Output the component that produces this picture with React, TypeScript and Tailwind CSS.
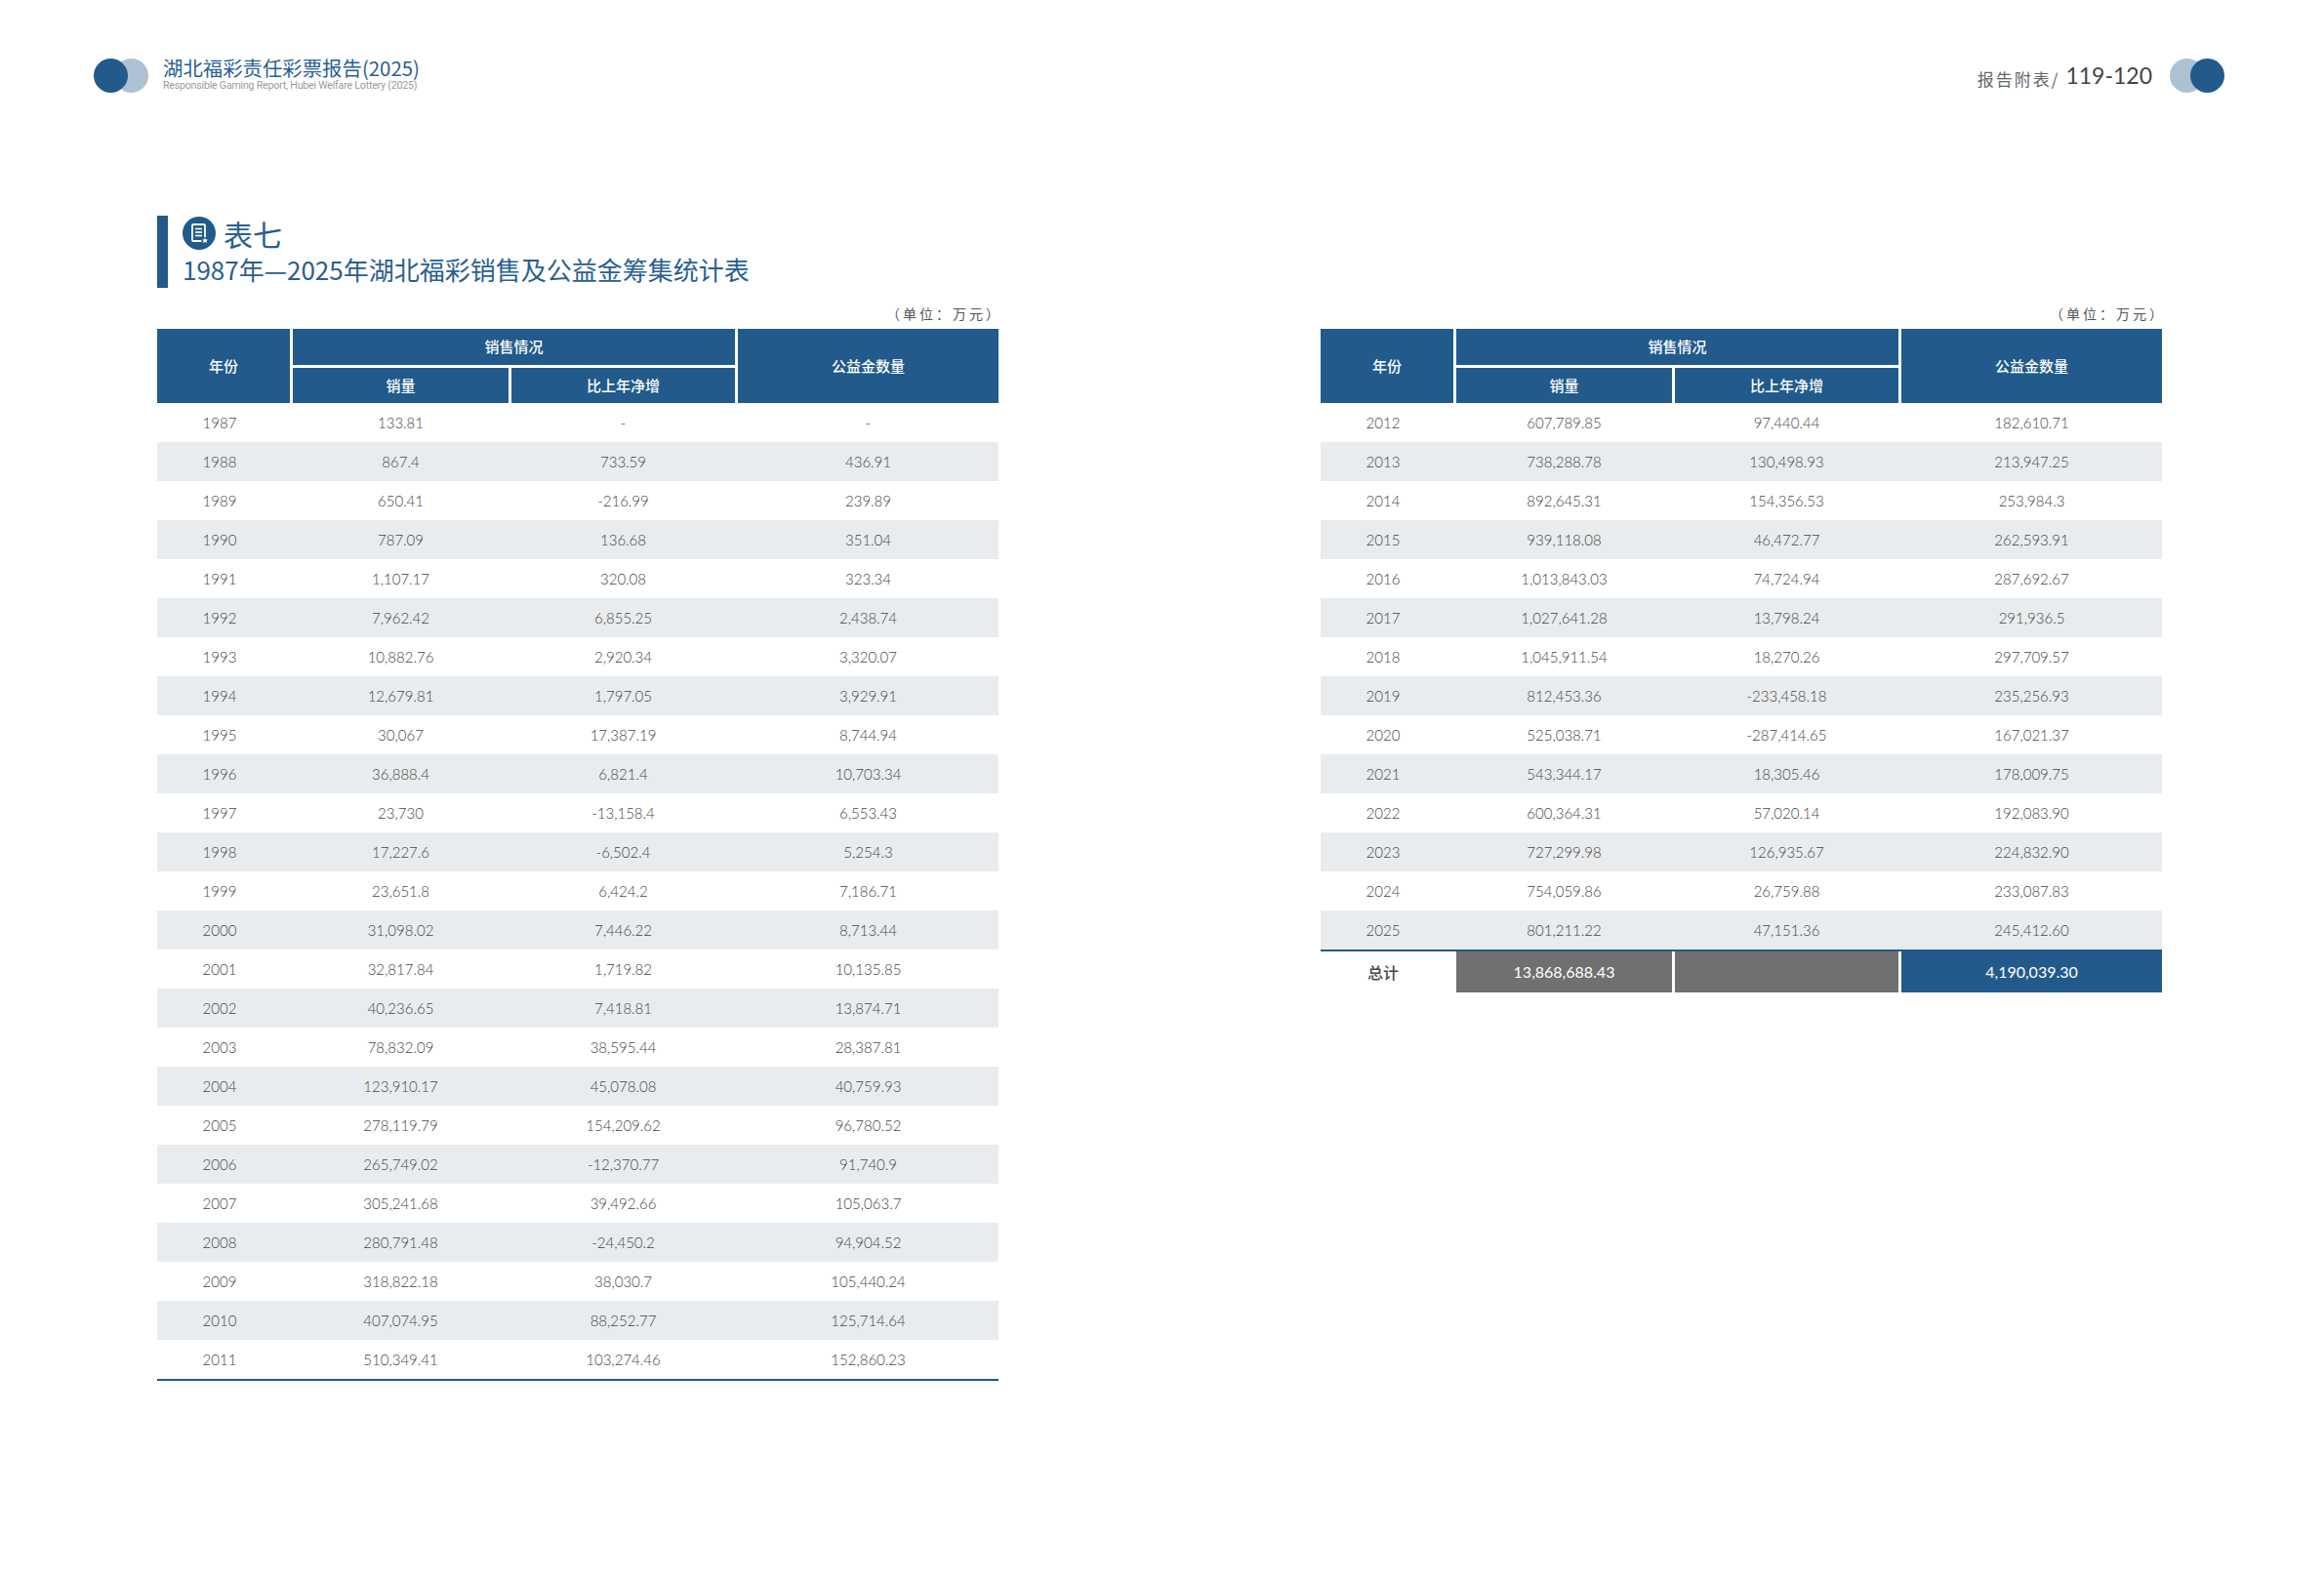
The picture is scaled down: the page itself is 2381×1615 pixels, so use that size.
import React from "react";

type Row = [string, string, string, string];

const leftRows: Row[] = [
  ["1987", "133.81", "-", "-"],
  ["1988", "867.4", "733.59", "436.91"],
  ["1989", "650.41", "-216.99", "239.89"],
  ["1990", "787.09", "136.68", "351.04"],
  ["1991", "1,107.17", "320.08", "323.34"],
  ["1992", "7,962.42", "6,855.25", "2,438.74"],
  ["1993", "10,882.76", "2,920.34", "3,320.07"],
  ["1994", "12,679.81", "1,797.05", "3,929.91"],
  ["1995", "30,067", "17,387.19", "8,744.94"],
  ["1996", "36,888.4", "6,821.4", "10,703.34"],
  ["1997", "23,730", "-13,158.4", "6,553.43"],
  ["1998", "17,227.6", "-6,502.4", "5,254.3"],
  ["1999", "23,651.8", "6,424.2", "7,186.71"],
  ["2000", "31,098.02", "7,446.22", "8,713.44"],
  ["2001", "32,817.84", "1,719.82", "10,135.85"],
  ["2002", "40,236.65", "7,418.81", "13,874.71"],
  ["2003", "78,832.09", "38,595.44", "28,387.81"],
  ["2004", "123,910.17", "45,078.08", "40,759.93"],
  ["2005", "278,119.79", "154,209.62", "96,780.52"],
  ["2006", "265,749.02", "-12,370.77", "91,740.9"],
  ["2007", "305,241.68", "39,492.66", "105,063.7"],
  ["2008", "280,791.48", "-24,450.2", "94,904.52"],
  ["2009", "318,822.18", "38,030.7", "105,440.24"],
  ["2010", "407,074.95", "88,252.77", "125,714.64"],
  ["2011", "510,349.41", "103,274.46", "152,860.23"],
];

const rightRows: Row[] = [
  ["2012", "607,789.85", "97,440.44", "182,610.71"],
  ["2013", "738,288.78", "130,498.93", "213,947.25"],
  ["2014", "892,645.31", "154,356.53", "253,984.3"],
  ["2015", "939,118.08", "46,472.77", "262,593.91"],
  ["2016", "1,013,843.03", "74,724.94", "287,692.67"],
  ["2017", "1,027,641.28", "13,798.24", "291,936.5"],
  ["2018", "1,045,911.54", "18,270.26", "297,709.57"],
  ["2019", "812,453.36", "-233,458.18", "235,256.93"],
  ["2020", "525,038.71", "-287,414.65", "167,021.37"],
  ["2021", "543,344.17", "18,305.46", "178,009.75"],
  ["2022", "600,364.31", "57,020.14", "192,083.90"],
  ["2023", "727,299.98", "126,935.67", "224,832.90"],
  ["2024", "754,059.86", "26,759.88", "233,087.83"],
  ["2025", "801,211.22", "47,151.36", "245,412.60"],
];

const cjk = "font-['Noto_Sans_CJK_SC',sans-serif]";
const num = "font-['Lato','Noto_Sans_CJK_SC',sans-serif]";
const cols = "grid grid-cols-[136px_221px_229px_267px] gap-[3px]";

function DocIcon() {
  return (
    <svg width="34" height="34" viewBox="0 0 34 34">
      <circle cx="17" cy="17" r="17" fill="#215a8b" />
      <rect x="10" y="8" width="13" height="17" rx="1" fill="none" stroke="#fff" strokeWidth="1.8" />
      <line x1="13" y1="12.5" x2="20" y2="12.5" stroke="#fff" strokeWidth="1.6" />
      <line x1="13" y1="16" x2="20" y2="16" stroke="#fff" strokeWidth="1.6" />
      <line x1="13" y1="19.5" x2="20" y2="19.5" stroke="#fff" strokeWidth="1.6" />
      <circle cx="23" cy="24.5" r="3.6" fill="#215a8b" />
      <path
        d="M23 21.4 L23.9 23.4 L26 23.6 L24.4 25 L24.9 27.1 L23 26 L21.1 27.1 L21.6 25 L20 23.6 L22.1 23.4 Z"
        fill="#fff"
      />
    </svg>
  );
}

function TableHead() {
  return (
    <div className={`${cols} grid-rows-[36.5px_36.5px] text-white text-[15px] font-medium ${cjk}`}>
      <div className="row-span-2 bg-[#215a8b] flex items-center justify-center">年份</div>
      <div className="col-span-2 bg-[#215a8b] flex items-center justify-center">销售情况</div>
      <div className="row-span-2 bg-[#215a8b] flex items-center justify-center">公益金数量</div>
      <div className="bg-[#215a8b] flex items-center justify-center">销量</div>
      <div className="bg-[#215a8b] flex items-center justify-center">比上年净增</div>
    </div>
  );
}

function DataRows({ rows }: { rows: Row[] }) {
  return (
    <div className={`${num} font-light text-[15px] text-[#454545]`}>
      {rows.map((r, i) => (
        <div
          key={r[0]}
          className={`${cols} h-[40px] items-center text-center ${i % 2 === 1 ? "bg-[#e9ecee]" : "bg-white"}`}
        >
          {r.map((c, j) => (
            <div key={j} className={j === 0 ? "pr-[8px]" : ""}>
              {c}
            </div>
          ))}
        </div>
      ))}
    </div>
  );
}

function Unit() {
  return (
    <div className={`h-[20px] mb-[6px] flex items-center justify-end -mr-[4px] text-[14px] tracking-[3px] text-[#555] ${cjk}`}>
      （单位：万元）
    </div>
  );
}

export default function App() {
  return (
    <div className="w-[2381px] h-[1615px] bg-white overflow-hidden">
      {/* page header */}
      <div className="flex justify-between items-center pt-[60px] pl-[96px] pr-[102px]">
        <div className="flex items-center">
          <div className="relative w-[56px] h-[35px]">
            <div className="absolute left-[21px] top-0 w-[35px] h-[35px] rounded-full bg-[#aec1d3]" />
            <div className="absolute left-0 top-0 w-[35px] h-[35px] rounded-full bg-[#215a8b]" />
          </div>
          <div className="ml-[15px] -mt-[5px] flex flex-col">
            <div className={`text-[20.4px] leading-[24px] text-[#2a5f90] ${cjk}`}>湖北福彩责任彩票报告(2025)</div>
            <div className="text-[10.6px] leading-[12px] text-[#9a9a9a] tracking-[-0.2px] font-['Roboto',sans-serif] mt-[1px]">
              Responsible Gaming Report, Hubei Welfare Lottery (2025)
            </div>
          </div>
        </div>
        <div className="flex items-center">
          <span className={`text-[17px] tracking-[2px] text-[#666] mt-[6px] ${cjk}`}>报告附表/</span>
          <span className={`ml-[6px] text-[23px] text-[#444] ${num}`}>119-120</span>
          <div className="relative w-[56px] h-[35px] ml-[18px]">
            <div className="absolute left-0 top-0 w-[35px] h-[35px] rounded-full bg-[#aec1d3]" />
            <div className="absolute left-[21px] top-0 w-[35px] h-[35px] rounded-full bg-[#215a8b]" />
          </div>
        </div>
      </div>

      {/* title */}
      <div className="mt-[126px] ml-[161px] flex">
        <div className="w-[11px] h-[74px] bg-[#215a8b]" />
        <div className="ml-[15px] flex flex-col">
          <div className="flex items-center h-[36px]">
            <DocIcon />
            <span className={`ml-[8px] text-[30px] leading-[36px] text-[#2a5f90] ${cjk}`}>表七</span>
          </div>
          <div className={`mt-[2px] text-[26px] leading-[34px] text-[#2a5f90] ${cjk}`}>
            1987年—2025年湖北福彩销售及公益金筹集统计表
          </div>
        </div>
      </div>

      {/* tables */}
      <div className="mt-[16px] ml-[161px] flex gap-[330px]">
        <div className="w-[862px]">
          <Unit />
          <TableHead />
          <DataRows rows={leftRows} />
          <div className="h-[2px] bg-[#215a8b]" />
        </div>
        <div className="w-[862px]">
          <Unit />
          <TableHead />
          <DataRows rows={rightRows} />
          <div className="h-[2px] bg-[#215a8b]" />
          <div className={`${cols} h-[42px] items-stretch text-center text-[16px]`}>
            <div className={`flex items-center justify-center pr-[8px] text-[#444] font-medium ${cjk}`}>总计</div>
            <div className={`flex items-center justify-center bg-[#707070] text-white ${num}`}>13,868,688.43</div>
            <div className="bg-[#707070]" />
            <div className={`flex items-center justify-center bg-[#215a8b] text-white ${num}`}>4,190,039.30</div>
          </div>
        </div>
      </div>
    </div>
  );
}
